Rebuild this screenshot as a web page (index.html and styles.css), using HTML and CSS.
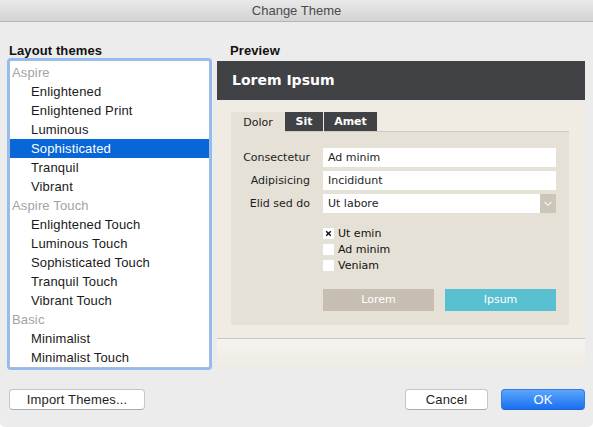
FILE: index.html
```html
<!DOCTYPE html>
<html>
<head>
<meta charset="utf-8">
<link rel="stylesheet" href="styles.css">
</head>
<body>
<div class="window">
  <div class="titlebar">Change Theme</div>
  <div class="main">
    <div class="left">
      <div class="label">Layout themes</div>
      <div class="list">
        <div class="row group">Aspire</div>
        <div class="row item">Enlightened</div>
        <div class="row item">Enlightened Print</div>
        <div class="row item">Luminous</div>
        <div class="row item selected">Sophisticated</div>
        <div class="row item">Tranquil</div>
        <div class="row item">Vibrant</div>
        <div class="row group">Aspire Touch</div>
        <div class="row item">Enlightened Touch</div>
        <div class="row item">Luminous Touch</div>
        <div class="row item">Sophisticated Touch</div>
        <div class="row item">Tranquil Touch</div>
        <div class="row item">Vibrant Touch</div>
        <div class="row group">Basic</div>
        <div class="row item">Minimalist</div>
        <div class="row item">Minimalist Touch</div>
      </div>
    </div>
    <div class="right">
      <div class="label preview-label">Preview</div>
      <div class="preview">
        <div class="pv-header">Lorem Ipsum</div>
        <div class="pv-body">
          <div class="tabs">
            <div class="tab active">Dolor</div>
            <div class="tab dark">Sit</div>
            <div class="tab dark amet">Amet</div>
            <div class="tab-fill"></div>
          </div>
          <div class="tab-panel">
            <div class="frow">
              <div class="flabel">Consectetur</div>
              <div class="input">Ad minim</div>
            </div>
            <div class="frow">
              <div class="flabel">Adipisicing</div>
              <div class="input">Incididunt</div>
            </div>
            <div class="frow last">
              <div class="flabel">Elid sed do</div>
              <div class="input select">
                <span class="sel-text">Ut labore</span>
                <span class="sel-arrow"><svg width="16" height="19" viewBox="0 0 16 19"><polyline points="4.5,8 8,11.3 11.5,8" fill="none" stroke="#f4f1ea" stroke-width="1.2"/></svg></span>
              </div>
            </div>
            <div class="checks">
              <div class="check"><span class="box"><svg width="11" height="11" viewBox="0 0 11 11"><path d="M3.2 3.2 L7.8 7.8 M7.8 3.2 L3.2 7.8" stroke="#111" stroke-width="1.4" fill="none"/></svg></span>Ut emin</div>
              <div class="check"><span class="box"></span>Ad minim</div>
              <div class="check"><span class="box"></span>Veniam</div>
            </div>
            <div class="pbtns">
              <div class="pbtn lorem">Lorem</div>
              <div class="pbtn ipsum">Ipsum</div>
            </div>
          </div>
        </div>
        <div class="pv-footer"></div>
      </div>
    </div>
  </div>
  <div class="footer">
    <div class="btn import">Import Themes...</div>
    <div class="right-btns">
      <div class="btn cancel">Cancel</div>
      <div class="btn ok">OK</div>
    </div>
  </div>
</div>
</body>
</html>
```
FILE: styles.css
```css
* { box-sizing: border-box; }
html, body { margin: 0; padding: 0; background: #ffffff; }
.window {
  width: 593px;
  height: 427px;
  background: #ececec;
  border-radius: 0 0 5px 5px;
  overflow: hidden;
  font-family: "Liberation Sans", Arial, sans-serif;
  color: #1c1c1c;
}
.titlebar {
  height: 22px;
  line-height: 21px;
  border-bottom: 1px solid #b6b6b6;
  background: linear-gradient(#e9e9e9, #d3d3d3);
  text-align: center;
  font-size: 13px;
  color: #4b4b4b;
}
.main {
  display: flex;
  padding: 21px 8px 0 8px;
  gap: 5px;
  height: 347px;
}
.left { width: 204px; }
.label {
  font-weight: bold;
  font-size: 13px;
  line-height: 16px;
  letter-spacing: 0.1px;
  color: #111;
  padding-left: 1px;
  margin-bottom: 1px;
}
.list {
  margin-left: 1px;
  width: 201px;
  height: 308px;
  background: #fff;
  border: 1px solid #a7bcd8;
  box-shadow: 0 0 0 2px #92bbef;
  border-radius: 2px;
  padding-top: 1.5px;
}
.row {
  height: 19px;
  line-height: 19px;
  font-size: 13px;
  letter-spacing: 0.15px;
  white-space: nowrap;
}
.row.group { color: #a3a3a3; padding-left: 2px; }
.row.item { color: #1a1a1a; padding-left: 21px; }
.row.selected { background: #0766d8; color: #fff; }
.right { width: 370px; }
.preview-label { padding-left: 15px; margin-bottom: 2px; }
.preview {
  margin-left: 2px;
  width: 368px;
  height: 306px;
  display: flex;
  flex-direction: column;
  font-family: "DejaVu Sans", Verdana, sans-serif;
}
.pv-header {
  height: 39px;
  line-height: 39px;
  background: #414245;
  color: #fff;
  font-weight: bold;
  font-size: 14px;
  padding-left: 15px;
}
.pv-body {
  height: 238px;
  background: #f0ece3;
  padding: 12px 16px 13px 14px;
}
.tabs {
  display: flex;
  align-items: flex-end;
  height: 20px;
}
.tab {
  height: 20px;
  line-height: 20px;
  font-size: 11px;
  text-align: center;
}
.tab.active {
  width: 54px;
  background: #e5e1d7;
  color: #1a1a1a;
  line-height: 21px;
}
.tab.dark {
  background: #414245;
  color: #fff;
  font-weight: bold;
  border-bottom: 1px solid #cfcac0;
  width: 38px;
}
.tab.amet { width: 53px; margin-left: 1px; }
.tab-fill {
  flex: 1;
  height: 20px;
  border-bottom: 1px solid #cfcac0;
}
.tab-panel {
  height: 193px;
  background: #e5e1d7;
  padding: 16px 13px 14px 0;
  font-size: 11px;
  color: #1e1e1e;
}
.frow {
  display: flex;
  align-items: center;
  height: 19px;
  margin-bottom: 4px;
}
.frow.last { margin-bottom: 0; }
.flabel {
  width: 79px;
  margin-right: 13px;
  text-align: right;
  white-space: nowrap;
}
.input {
  flex: 1;
  height: 19px;
  line-height: 20px;
  background: #fff;
  padding-left: 5px;
  color: #1e1e1e;
}
.input.select {
  display: flex;
  padding-right: 0;
}
.sel-text { flex: 1; }
.sel-arrow {
  width: 16px;
  height: 19px;
  background: #cbc5ba;
  display: flex;
}
.checks {
  margin-left: 92px;
  margin-top: 12px;
}
.check {
  display: flex;
  align-items: center;
  height: 16px;
  gap: 4px;
  color: #111;
}
.box {
  width: 11px;
  height: 11px;
  background: #fff;
  display: flex;
}
.pbtns {
  margin-left: 92px;
  margin-top: 16px;
  display: flex;
  gap: 11px;
}
.pbtn {
  width: 111px;
  height: 22px;
  line-height: 22px;
  text-align: center;
  color: #fff;
  font-size: 11px;
}
.pbtn.lorem { background: #c6beb2; }
.pbtn.ipsum { background: #58c0d1; }
.pv-footer {
  height: 29px;
  border-top: 1px solid #cbc7bf;
  background: linear-gradient(#f6f4f0, #eeebe3);
}
.footer {
  display: flex;
  justify-content: space-between;
  padding: 20px 8px 0 9px;
}
.right-btns { display: flex; gap: 13px; }
.btn {
  height: 21px;
  line-height: 19px;
  font-size: 13px;
  letter-spacing: 0.15px;
  text-align: center;
  background: #fff;
  border: 1px solid #c6c6c6;
  border-bottom-color: #acacac;
  border-radius: 4px;
  color: #1e1e1e;
}
.btn.import { width: 136px; }
.btn.cancel { width: 83px; }
.btn.ok {
  width: 84px;
  background: linear-gradient(#5aa6fc, #1b6ff2);
  border-color: #2e7ae9;
  border-bottom-color: #1d63d6;
  color: #fff;
}
```
